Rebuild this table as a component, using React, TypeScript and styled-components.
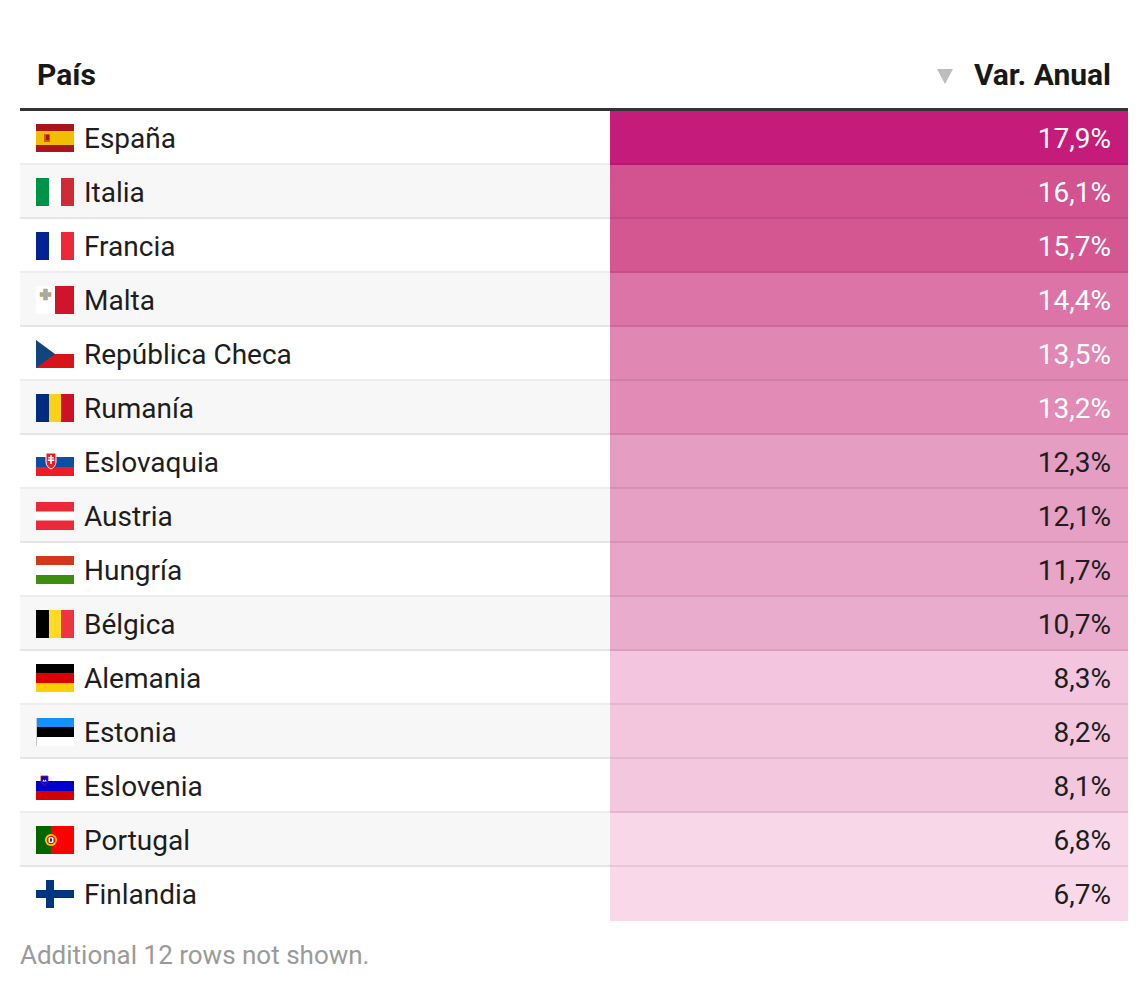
import React from "react";
import styled, { createGlobalStyle } from "styled-components";

const GlobalStyle = createGlobalStyle`
  body {
    margin: 0;
    background: #ffffff;
    font-family: Roboto, "Liberation Sans", sans-serif;
    color: #1d1d1d;
  }
`;

const Page = styled.div`
  padding: 40px 20px 0 20px;
  width: 1108px;
`;

const Table = styled.div`
  display: flex;
  flex-direction: column;
`;

const HeadRow = styled.div`
  display: grid;
  grid-template-columns: 590px 518px;
  height: 68px;
  border-bottom: 3px solid #333333;
`;

const HeadCell = styled.div<{ $right?: boolean }>`
  display: flex;
  align-items: center;
  justify-content: ${(p) => (p.$right ? "flex-end" : "flex-start")};
  gap: 21px;
  padding: 0 17px;
  font-size: 30px;
  font-weight: 700;
  color: #181818;
`;

const SortArrow = styled.span`
  width: 0;
  height: 0;
  border-left: 8px solid transparent;
  border-right: 8px solid transparent;
  border-top: 15px solid #bdbdbd;
  margin-top: 4px;
`;

const Row = styled.div<{ $shaded: boolean }>`
  display: grid;
  grid-template-columns: 590px 518px;
  height: 54px;
  box-sizing: border-box;
  position: relative;
  background: ${(p) => (p.$shaded ? "#f7f7f7" : "#ffffff")};
  &:not(:last-child)::after {
    content: "";
    position: absolute;
    left: 0;
    right: 0;
    bottom: 0;
    height: 2px;
    background: rgba(0, 0, 0, 0.07);
  }
  &:first-of-type {
    height: 55px;
  }
`;

const CountryCell = styled.div`
  display: flex;
  align-items: center;
  gap: 10px;
  padding-left: 16px;
  font-size: 28px;
  color: #1d1d1d;
`;

const ValueCell = styled.div<{ $bg: string; $light: boolean }>`
  display: flex;
  align-items: center;
  justify-content: flex-end;
  padding-right: 17px;
  font-size: 28px;
  background: ${(p) => p.$bg};
  color: ${(p) => (p.$light ? "#ffffff" : "#1d1d1d")};
`;

const Footer = styled.div`
  margin-top: 19px;
  font-size: 26px;
  color: #9a9a9a;
`;

const FlagBox = styled.svg`
  width: 38px;
  height: 28px;
  flex-shrink: 0;
  display: block;
`;

const W = 38;
const H = 28;

const Flag = ({ code }: { code: string }) => {
  let inner: React.ReactNode = null;
  switch (code) {
    case "es":
      inner = (
        <>
          <rect width={W} height={H} fill="#aa151b" />
          <rect y={7} width={W} height={14} fill="#f1bf00" />
          <rect x={8} y={10} width={6} height={8} fill="#c8102e" opacity={0.6} />
          <rect x={10} y={11} width={3} height={5} fill="#ad1519" />
        </>
      );
      break;
    case "it":
      inner = (
        <>
          <rect width={13} height={H} fill="#009246" />
          <rect x={13} width={12} height={H} fill="#ffffff" />
          <rect x={25} width={13} height={H} fill="#ce2b37" />
        </>
      );
      break;
    case "fr":
      inner = (
        <>
          <rect width={13} height={H} fill="#002395" />
          <rect x={13} width={12} height={H} fill="#ffffff" />
          <rect x={25} width={13} height={H} fill="#ed2939" />
        </>
      );
      break;
    case "mt":
      inner = (
        <>
          <rect width={19} height={H} fill="#ffffff" />
          <rect x={19} width={19} height={H} fill="#cf142b" />
          <path d="M7.5 3h4v3.5h3.5v4h-3.5v3.5h-4v-3.5h-3.5v-4h3.5z" fill="#a8a8a8" stroke="#c9a25a" strokeWidth={0.6} />
        </>
      );
      break;
    case "cz":
      inner = (
        <>
          <rect width={W} height={14} fill="#ffffff" />
          <rect y={14} width={W} height={14} fill="#d7141a" />
          <path d="M0 0L19 14L0 28z" fill="#11457e" />
        </>
      );
      break;
    case "ro":
      inner = (
        <>
          <rect width={13} height={H} fill="#002b7f" />
          <rect x={13} width={12} height={H} fill="#fcd116" />
          <rect x={25} width={13} height={H} fill="#ce1126" />
        </>
      );
      break;
    case "sk":
      inner = (
        <>
          <rect width={W} height={9} fill="#ffffff" />
          <rect y={9} width={W} height={10} fill="#0b4ea2" />
          <rect y={19} width={W} height={9} fill="#ee1c25" />
          <path d="M10 5h10v9c0 4-3 6-5 7c-2-1-5-3-5-7z" fill="#ee1c25" stroke="#ffffff" strokeWidth={1} />
          <path d="M14.2 7h1.6v2h2v1.4h-2v1.2h2.4v1.4h-2.4v3h-1.6v-3h-2.4v-1.4h2.4v-1.2h-2v-1.4h2z" fill="#ffffff" />
        </>
      );
      break;
    case "at":
      inner = (
        <>
          <rect width={W} height={H} fill="#ed2939" />
          <rect y={9.5} width={W} height={9} fill="#ffffff" />
        </>
      );
      break;
    case "hu":
      inner = (
        <>
          <rect width={W} height={9} fill="#d4371c" />
          <rect y={9} width={W} height={10} fill="#ffffff" />
          <rect y={19} width={W} height={9} fill="#3d8e0e" />
        </>
      );
      break;
    case "be":
      inner = (
        <>
          <rect width={13} height={H} fill="#000000" />
          <rect x={13} width={12} height={H} fill="#fdda24" />
          <rect x={25} width={13} height={H} fill="#ef3340" />
        </>
      );
      break;
    case "de":
      inner = (
        <>
          <rect width={W} height={9} fill="#000000" />
          <rect y={9} width={W} height={10} fill="#dd0000" />
          <rect y={19} width={W} height={9} fill="#ffce00" />
        </>
      );
      break;
    case "ee":
      inner = (
        <>
          <rect width={W} height={9} fill="#1291ff" />
          <rect y={9} width={W} height={10} fill="#000000" />
          <rect y={19} width={W} height={9} fill="#ffffff" />
          <rect width={1} height={H} fill="#c9c9c9" />
        </>
      );
      break;
    case "si":
      inner = (
        <>
          <rect width={W} height={9} fill="#ffffff" />
          <rect y={9} width={W} height={10} fill="#0000cc" />
          <rect y={19} width={W} height={9} fill="#d40000" />
          <path d="M5 4h7v5c0 2-2 3.5-3.5 4c-1.5-0.5-3.5-2-3.5-4z" fill="#0000cc" stroke="#d40000" strokeWidth={0.8} />
          <path d="M6.2 9.5l1.3-2l1 1.5l1-1.5l1.3 2z" fill="#ffffff" />
        </>
      );
      break;
    case "pt":
      inner = (
        <>
          <rect width={15} height={H} fill="#006600" />
          <rect x={15} width={23} height={H} fill="#ff0000" />
          <circle cx={15} cy={14} r={6} fill="#ffcc00" />
          <circle cx={15} cy={14} r={4.3} fill="#ff0000" />
          <rect x={12.5} y={11} width={5} height={6} rx={1.5} fill="#ffffff" />
          <rect x={14} y={12.5} width={2} height={3} fill="#003399" />
        </>
      );
      break;
    case "fi":
      inner = (
        <>
          <rect width={W} height={H} fill="#ffffff" />
          <rect x={10} width={8} height={H} fill="#003580" />
          <rect y={10} width={W} height={8} fill="#003580" />
        </>
      );
      break;
  }
  return (
    <FlagBox viewBox={`0 0 ${W} ${H}`} preserveAspectRatio="none">
      {inner}
    </FlagBox>
  );
};

type Entry = { name: string; code: string; value: string; bg: string; light: boolean };

const data: Entry[] = [
  { name: "España", code: "es", value: "17,9%", bg: "#c51b7a", light: true },
  { name: "Italia", code: "it", value: "16,1%", bg: "#d35290", light: true },
  { name: "Francia", code: "fr", value: "15,7%", bg: "#d45792", light: true },
  { name: "Malta", code: "mt", value: "14,4%", bg: "#dc74a7", light: true },
  { name: "República Checa", code: "cz", value: "13,5%", bg: "#e087b4", light: true },
  { name: "Rumanía", code: "ro", value: "13,2%", bg: "#e18bb6", light: true },
  { name: "Eslovaquia", code: "sk", value: "12,3%", bg: "#e59dc1", light: false },
  { name: "Austria", code: "at", value: "12,1%", bg: "#e6a0c4", light: false },
  { name: "Hungría", code: "hu", value: "11,7%", bg: "#e8a5c7", light: false },
  { name: "Bélgica", code: "be", value: "10,7%", bg: "#eaaccc", light: false },
  { name: "Alemania", code: "de", value: "8,3%", bg: "#f3c5de", light: false },
  { name: "Estonia", code: "ee", value: "8,2%", bg: "#f3c6de", light: false },
  { name: "Eslovenia", code: "si", value: "8,1%", bg: "#f3c8df", light: false },
  { name: "Portugal", code: "pt", value: "6,8%", bg: "#f8d7e8", light: false },
  { name: "Finlandia", code: "fi", value: "6,7%", bg: "#f9d9e9", light: false },
];

const App = () => {
  return (
    <Page>
      <GlobalStyle />
      <Table>
        <HeadRow>
          <HeadCell>País</HeadCell>
          <HeadCell $right>
            <SortArrow />
            Var. Anual
          </HeadCell>
        </HeadRow>
        {data.map((d, i) => (
          <Row key={d.code} $shaded={i % 2 === 1}>
            <CountryCell>
              <Flag code={d.code} />
              {d.name}
            </CountryCell>
            <ValueCell $bg={d.bg} $light={d.light}>
              {d.value}
            </ValueCell>
          </Row>
        ))}
      </Table>
      <Footer>Additional 12 rows not shown.</Footer>
    </Page>
  );
};

export default App;
